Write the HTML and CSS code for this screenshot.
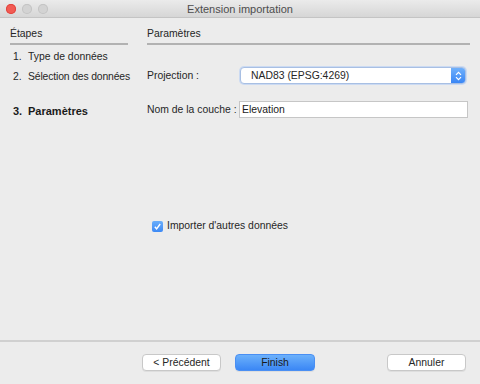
FILE: index.html
```html
<!DOCTYPE html>
<html lang="fr">

<head>
    <meta charset="UTF-8">
    <title>Extension importation</title>
    <link rel="stylesheet" href="styles.css">
</head>

<body>
    <div class="titlebar">
        <div class="lights">
            <span class="light light-close"></span>
            <span class="light"></span>
            <span class="light"></span>
        </div>
        <span class="title">Extension importation</span>
    </div>

    <div class="wizard">
        <div class="steps">
            <div class="col-title">Étapes</div>
            <div class="step step-1"><span class="num">1.</span>Type de données</div>
            <div class="step step-2"><span class="num">2.</span>Sélection des données</div>
            <div class="step step-3 current"><span class="num">3.</span>Paramètres</div>
        </div>

        <div class="params">
            <div class="col-title">Paramètres</div>
            <div class="form">
                <label class="form-label">Projection :</label>
                <div class="select">
                    <span class="select-value">NAD83 (EPSG:4269)</span>
                    <span class="select-arrow">
                        <svg width="7" height="10" viewBox="0 0 7 10">
                            <path d="M1 3.8 L3.5 1.3 L6 3.8 M1 6.2 L3.5 8.7 L6 6.2" fill="none" stroke="#fff" stroke-width="1.2" />
                        </svg>
                    </span>
                </div>
                <label class="form-label">Nom de la couche :</label>
                <input class="text-input" type="text" value="Elevation">
            </div>
            <div class="check-row">
                <span class="checkbox">
                    <svg width="11" height="11" viewBox="0 0 11 11">
                        <path d="M2.8 5.8 L4.6 7.8 L8.2 3" fill="none" stroke="#fff" stroke-width="1.4" />
                    </svg>
                </span>
                <span>Importer d'autres données</span>
            </div>
        </div>
    </div>

    <div class="footer">
        <button class="btn">&lt; Précédent</button>
        <button class="btn btn-primary">Finish</button>
        <button class="btn btn-cancel">Annuler</button>
    </div>
</body>

</html>
```

FILE: styles.css
```css
html,
body {
    margin: 0;
    padding: 0;
}

body {
    width: 480px;
    height: 384px;
    overflow: hidden;
    background: #ececec;
    font-family: 'Liberation Sans', Arial, sans-serif;
    font-size: 10.4px;
    color: #262626;
}

.titlebar {
    height: 17px;
    background: linear-gradient(#ebebeb, #d6d6d6);
    border-bottom: 1px solid #c4c4c4;
    display: flex;
    align-items: center;
    position: relative;
}

.lights {
    display: flex;
    gap: 6px;
    margin-left: 6px;
}

.light {
    width: 10px;
    height: 10px;
    border-radius: 50%;
    background: #d3d3d3;
    box-shadow: inset 0 0 0 1px #c4c4c4;
}

.light-close {
    background: #f25b53;
    box-shadow: inset 0 0 0 1px #e0443e;
}

.title {
    position: absolute;
    left: 0;
    right: 0;
    text-align: center;
    font-size: 11px;
    color: #4d4d4d;
}

.wizard {
    display: flex;
    gap: 19px;
    height: 322px;
    padding: 0 10px;
    box-sizing: border-box;
}

.steps {
    width: 118px;
    padding-top: 9px;
}

.params {
    flex: 1;
    padding-top: 9px;
}

.col-title {
    line-height: 14px;
    padding-bottom: 2px;
    border-bottom: 2px solid #b2b2b2;
}

.step {
    display: flex;
    line-height: 14px;
    padding-left: 3px;
    white-space: nowrap;
}

.step .num {
    flex: none;
    width: 15px;
}

.step-1 {
    margin-top: 5px;
}

.step-2 {
    margin-top: 6px;
    letter-spacing: -0.15px;
}

.step-3 {
    margin-top: 20px;
}

.current {
    font-weight: bold;
    font-size: 11px;
    color: #1a1a1a;
}

.form {
    display: grid;
    grid-template-columns: 92px 1fr;
    grid-auto-rows: 17px;
    row-gap: 17px;
    align-items: center;
    margin-top: 22px;
    padding-right: 2px;
}

.form-label {
    white-space: nowrap;
}

.select {
    height: 17px;
    margin: 0 2px 0 1px;
    display: flex;
    align-items: stretch;
    background: #fff;
    border: 1px solid #a8bfe3;
    border-radius: 4px;
    box-shadow: 0 0 0 1px #cbdaf2;
    box-sizing: border-box;
    overflow: hidden;
}

.select-value {
    flex: 1;
    padding-left: 10px;
    line-height: 15px;
}

.select-arrow {
    width: 14px;
    display: flex;
    align-items: center;
    justify-content: center;
    background: linear-gradient(#6fb0fb, #3a86f5);
}

.text-input {
    height: 17px;
    box-sizing: border-box;
    margin: 0;
    padding: 0 2px;
    border: 1px solid #c6c6c6;
    background: #fff;
    font: inherit;
    color: #1a1a1a;
    outline: none;
}

.check-row {
    display: flex;
    align-items: center;
    gap: 4px;
    margin-top: 101px;
    margin-left: 5px;
    line-height: 14px;
}

.checkbox {
    width: 11px;
    height: 11px;
    border-radius: 2px;
    background: linear-gradient(#6aaefa, #3d89f5);
    display: flex;
}

.footer {
    border-top: 2px solid #d0d0d0;
    display: flex;
    gap: 14px;
    padding: 12px 14px 0 142px;
}

.btn {
    width: 79px;
    height: 17px;
    padding: 0;
    border: 1px solid #c8c8c8;
    border-radius: 4px;
    background: #fff;
    box-shadow: 0 1px 0 rgba(0, 0, 0, 0.06);
    font-family: inherit;
    font-size: 10.4px;
    color: #262626;
}

.btn-primary {
    width: 80px;
    border-color: #4a8ff3;
    background: linear-gradient(#6cb1fb, #3b87f5);
    color: #1a1a1a;
}

.btn-cancel {
    margin-left: auto;
}
```
